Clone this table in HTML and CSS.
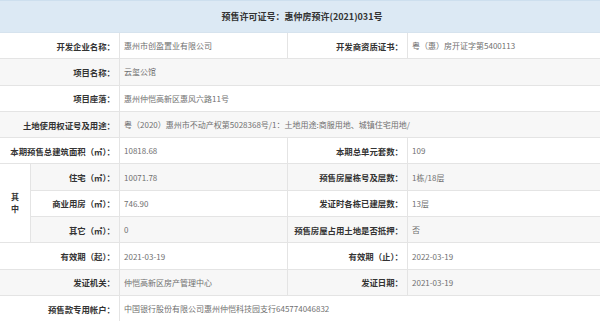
FILE: index.html
```html
<!DOCTYPE html>
<html lang="zh-CN">
<head>
<meta charset="utf-8">
<link rel="stylesheet" href="styles.css">
</head>
<body>
<div class="sheet">
  <div class="head">预售许可证号：惠仲房预许(2021)031号</div>

  <div class="lab span2">开发企业名称：</div>
  <div class="val">惠州市创盈置业有限公司</div>
  <div class="lab">开发商资质证书：</div>
  <div class="val last">粤（惠）房开证字第5400113</div>

  <div class="lab span2 alt">项目名称：</div>
  <div class="val wide alt">云玺公馆</div>

  <div class="lab span2">项目座落：</div>
  <div class="val wide">惠州仲恺高新区惠风六路11号</div>

  <div class="lab span2 alt">土地使用权证号及用途：</div>
  <div class="val wide alt">粤（2020）惠州市不动产权第5028368号/1：土地用途:商服用地、城镇住宅用地/</div>

  <div class="lab span2">本期预售总建筑面积（㎡）：</div>
  <div class="val">10818.68</div>
  <div class="lab">本期总单元套数：</div>
  <div class="val last">109</div>

  <div class="among">其<br>中</div>
  <div class="lab alt">住宅（㎡）：</div>
  <div class="val alt">10071.78</div>
  <div class="lab alt">预售房屋栋号及层数：</div>
  <div class="val last alt">1栋/18层</div>

  <div class="lab">商业用房（㎡）：</div>
  <div class="val">746.90</div>
  <div class="lab">发证时各栋已建层数：</div>
  <div class="val last">13层</div>

  <div class="lab alt">其它（㎡）：</div>
  <div class="val alt">0</div>
  <div class="lab alt">预售房屋占用土地是否抵押：</div>
  <div class="val last alt">否</div>

  <div class="lab span2">有效期（起）：</div>
  <div class="val">2021-03-19</div>
  <div class="lab">有效期（止）：</div>
  <div class="val last">2022-03-19</div>

  <div class="lab span2 alt">发证机关：</div>
  <div class="val alt">仲恺高新区房产管理中心</div>
  <div class="lab alt">发证日期：</div>
  <div class="val last alt">2021-03-19</div>

  <div class="lab span2">预售款专用帐户：</div>
  <div class="val wide">中国银行股份有限公司惠州仲恺科技园支行645774046832</div>
</div>
</body>
</html>
```

FILE: styles.css
```css
html, body {
  margin: 0;
  padding: 0;
  background: #ffffff;
}

.sheet {
  width: 600px;
  display: grid;
  grid-template-columns: 31px 89px 168px 120px 1fr;
  grid-template-rows: 33px repeat(11, 26.3px);
  font-family: "Noto Sans CJK SC", "Noto Sans", sans-serif;
  font-size: 8px;
}

.sheet > div {
  box-sizing: border-box;
  border-bottom: 1px solid #e4e4e4;
  border-right: 1px solid #e4e4e4;
  display: flex;
  align-items: center;
  white-space: nowrap;
  overflow: hidden;
  background: #ffffff;
}

.sheet > .head {
  grid-column: 1 / -1;
  justify-content: center;
  background: #dce9f4;
  border-top: 1px solid #cddfee;
  border-bottom: 1px solid #d6e3ee;
  border-right: none;
  font-weight: bold;
  font-size: 9px;
  color: #333333;
  padding-left: 4px;
}

.lab {
  justify-content: flex-end;
  padding-right: 4px;
  font-weight: bold;
  font-size: 8.4px;
  color: #333333;
}

.val {
  padding-left: 4px;
  color: #707070;
}

.span2 { grid-column: span 2; }
.wide { grid-column: span 3; border-right: none !important; }
.sheet > .last { border-right: none; }
.sheet > .alt { background: #f7f7f7; }

.sheet > .among {
  grid-row: span 3;
  justify-content: center;
  text-align: center;
  font-weight: bold;
  color: #333333;
  line-height: 12px;
}
```
